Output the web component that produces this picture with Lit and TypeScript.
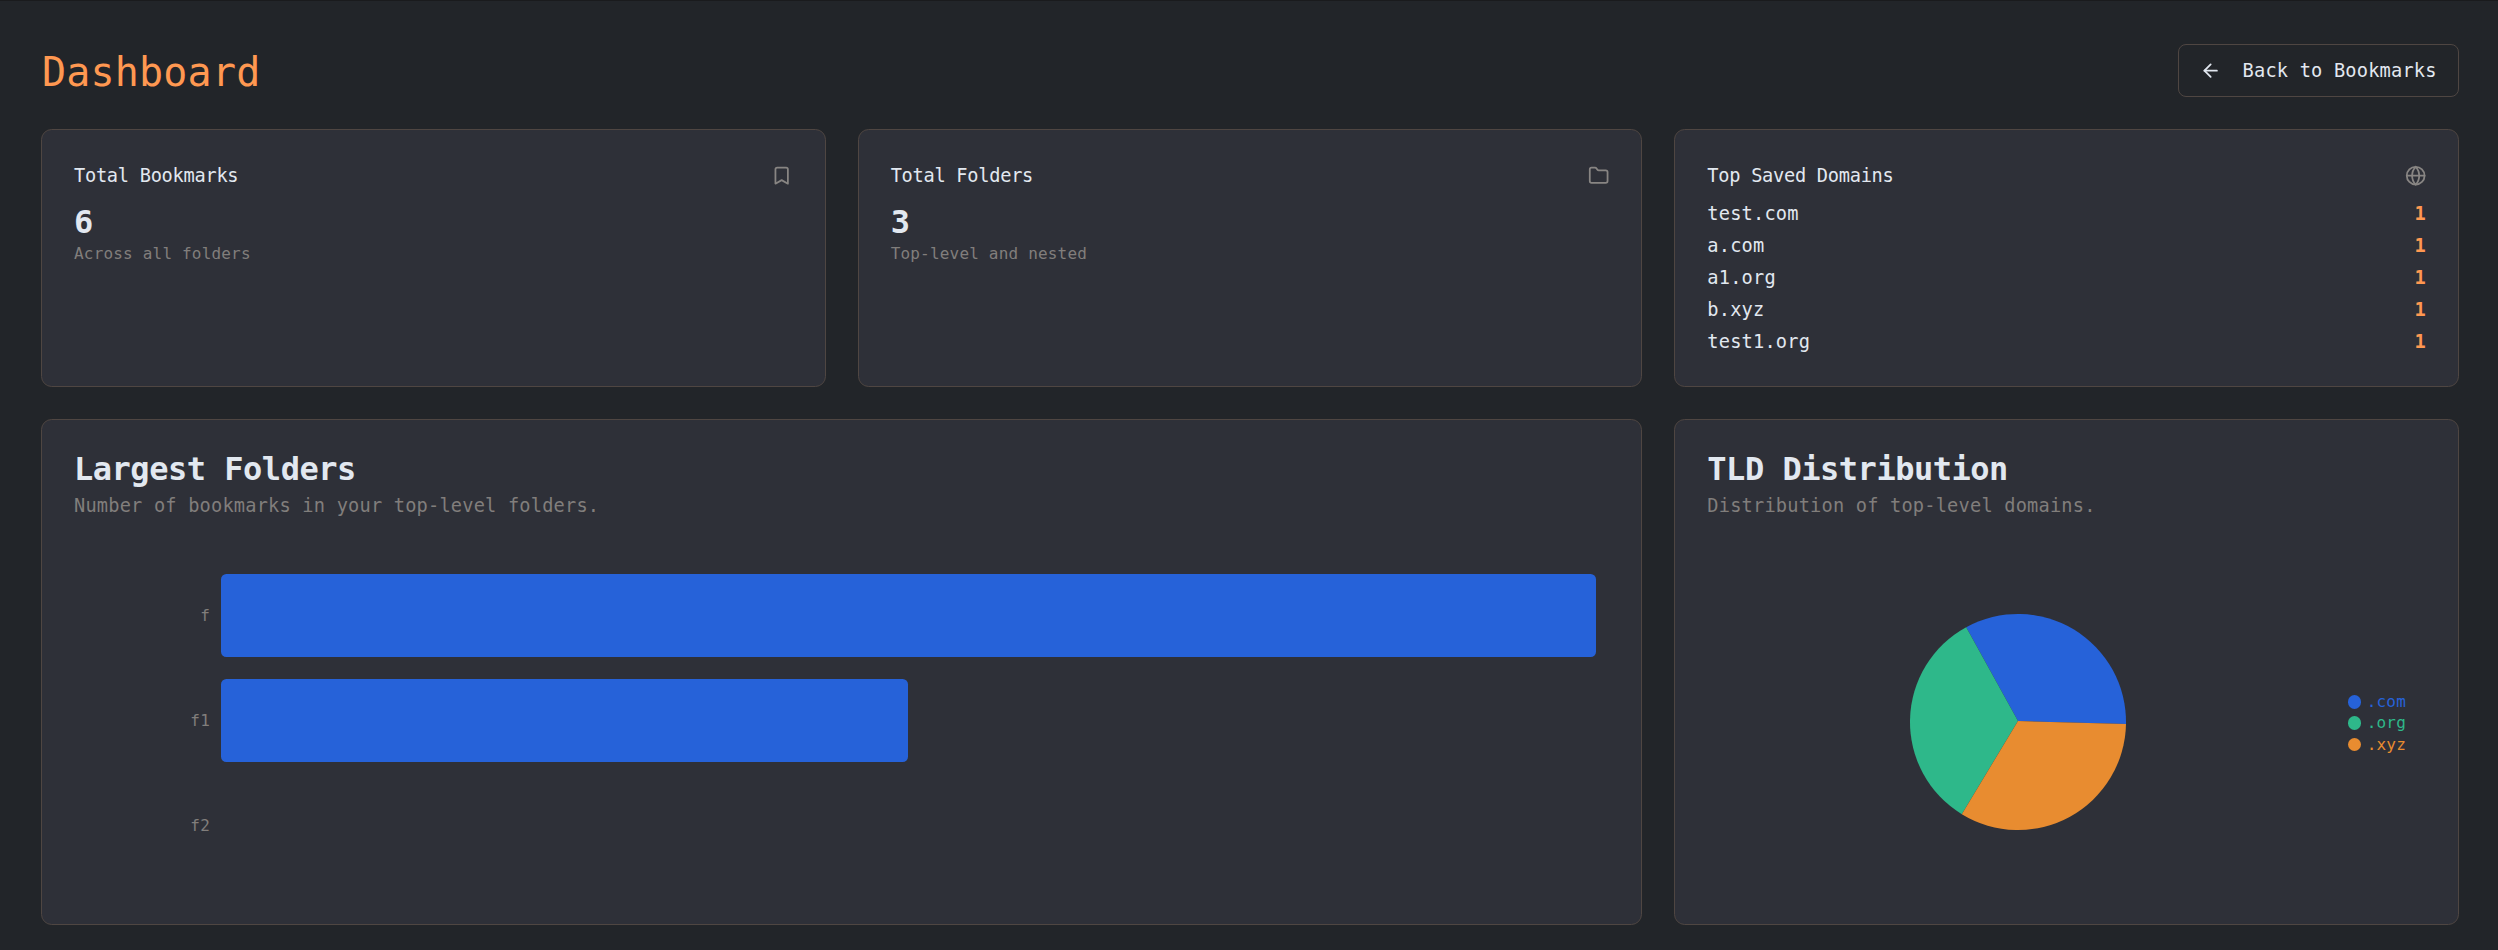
import { LitElement, html, css, svg } from "lit";
import { customElement } from "lit/decorators.js";

const DOMAINS = [["test.com", 1], ["a.com", 1], ["a1.org", 1], ["b.xyz", 1], ["test1.org", 1]];
const FOLDERS = [["f", 2], ["f1", 1], ["f2", 0]] as [string, number][];
const TLDS = [
  { name: ".com", color: "#2662d9", path: "M0 -1L108 2A108 108 0 0 0 -51.8 -94.8Z" },
  { name: ".org", color: "#2eb88a", path: "M0 -1L-51.8 -94.8A108 108 0 0 0 -56.2 92.2Z" },
  { name: ".xyz", color: "#e88c30", path: "M0 -1L-56.2 92.2A108 108 0 0 0 108 2Z" },
];

const icons = {
  bookmark: svg`<path d="m19 21-7-4-7 4V5a2 2 0 0 1 2-2h10a2 2 0 0 1 2 2v16z"/>`,
  folder: svg`<path d="M20 20a2 2 0 0 0 2-2V8a2 2 0 0 0-2-2h-7.9a2 2 0 0 1-1.69-.9L9.6 3.9A2 2 0 0 0 7.93 3H4a2 2 0 0 0-2 2v13a2 2 0 0 0 2 2Z"/>`,
  globe: svg`<circle cx="12" cy="12" r="10"/><path d="M12 2a14.5 14.5 0 0 0 0 20 14.5 14.5 0 0 0 0-20"/><path d="M2 12h20"/>`,
  arrow: svg`<path d="m12 19-7-7 7-7"/><path d="M19 12H5"/>`,
};
const icon = (name: keyof typeof icons) => html`<svg class="icon" viewBox="0 0 24 24">${icons[name]}</svg>`;

@customElement("app-root")
export class AppRoot extends LitElement {
  static styles = css`
    :host {
      display: block; box-sizing: border-box; height: 950px; padding: 42.67px 39px 0 41px;
      border-top: 1px solid #1a1b1d; background: #222529; color: #e2e8f0;
      font-family: "DejaVu Sans Mono", monospace; font-size: 18.67px; line-height: 26.67px;
      letter-spacing: 0.01em;
    }
    * { box-sizing: border-box; margin: 0; }
    header { display: flex; justify-content: space-between; align-items: center; height: 53.33px; margin-bottom: 32px; }
    h1 { font-size: 40px; line-height: 48px; font-weight: 400; color: #ff9851; padding: 4px 0 0 1px; }
    button {
      display: flex; align-items: center; height: 53.33px; padding: 0 21.33px; gap: 21.33px;
      border: 1px solid #4f4642; border-radius: 8px; background: none; color: inherit;
      font: inherit; letter-spacing: inherit;
    }
    button span { padding-top: 2px; }
    .icon { width: 21.33px; height: 21.33px; fill: none; stroke: currentColor; stroke-width: 2; stroke-linecap: round; stroke-linejoin: round; flex: none; }
    .grid { display: grid; grid-template-columns: repeat(3, 1fr); grid-template-rows: 258px 506.5px; gap: 32px; }
    .card { border: 1px solid #4f4642; border-radius: 10.67px; background: #2e3038; padding: 32px; min-width: 0; }
    .wide { grid-column: span 2; }
    .head { display: flex; justify-content: space-between; align-items: center; height: 26.67px; }
    .head .icon { color: #888583; }
    h3 { font-size: inherit; font-weight: 400; letter-spacing: -0.015em; padding-top: 2px; }
    .value { font-size: 32px; line-height: 42.67px; font-weight: 700; margin-top: 12px; }
    .note { font-size: 16px; line-height: 21.33px; color: #817e7c; }
    ul { list-style: none; padding: 0; margin-top: 12px; display: grid; gap: 5.33px; }
    li { display: flex; justify-content: space-between; }
    li b { color: #ff9851; }
    h2 { font-size: 32px; line-height: 32px; font-weight: 700; letter-spacing: -0.015em; padding-top: 1px; }
    .sub { color: #817e7c; margin-top: 8px; }
    .bars { padding: 43.3px 13px 0 0; }
    .row { display: grid; grid-template-columns: 136px 1fr; column-gap: 10.5px; align-items: center; height: 105px; }
    .label { text-align: right; font-size: 16px; color: #817e7c; padding-top: 2px; }
    .bar { height: 83px; border-radius: 5.33px; background: #2662d9; }
    .chart { display: grid; grid-template-columns: 1fr auto; align-items: center; height: 375px; padding: 32px 20px 0 0; }
    .pie { width: 220px; height: 220px; justify-self: center; margin: 0 19px 3px 0; }
    .legend { display: grid; font-size: 16px; line-height: 21.33px; }
    .key { display: flex; align-items: center; gap: 5.5px; }
    .dot { width: 13.5px; height: 13.5px; border-radius: 50%; background: currentColor; }
  `;

  render() {
    return html`
      <header>
        <h1>Dashboard</h1>
        <button>${icon("arrow")}<span>Back to Bookmarks</span></button>
      </header>
      <main class="grid">
        <section class="card">
          <div class="head"><h3>Total Bookmarks</h3>${icon("bookmark")}</div>
          <div class="value">6</div>
          <p class="note">Across all folders</p>
        </section>
        <section class="card">
          <div class="head"><h3>Total Folders</h3>${icon("folder")}</div>
          <div class="value">3</div>
          <p class="note">Top-level and nested</p>
        </section>
        <section class="card">
          <div class="head"><h3>Top Saved Domains</h3>${icon("globe")}</div>
          <ul>${DOMAINS.map(([d, n]) => html`<li><span>${d}</span><b>${n}</b></li>`)}</ul>
        </section>
        <section class="card wide">
          <h2>Largest Folders</h2>
          <p class="sub">Number of bookmarks in your top-level folders.</p>
          <div class="bars">
            ${FOLDERS.map(([f, n]) => html`<div class="row">
              <span class="label">${f}</span>
              <div class="bar" style="width:${n * 50}%"></div>
            </div>`)}
          </div>
        </section>
        <section class="card">
          <h2>TLD Distribution</h2>
          <p class="sub">Distribution of top-level domains.</p>
          <div class="chart">
            <svg class="pie" viewBox="-110 -110 220 220">
              ${TLDS.map((t) => svg`<path d=${t.path} fill=${t.color} />`)}
            </svg>
            <div class="legend">
              ${TLDS.map((t) => html`<div class="key" style="color:${t.color}"><i class="dot"></i>${t.name}</div>`)}
            </div>
          </div>
        </section>
      </main>`;
  }
}
